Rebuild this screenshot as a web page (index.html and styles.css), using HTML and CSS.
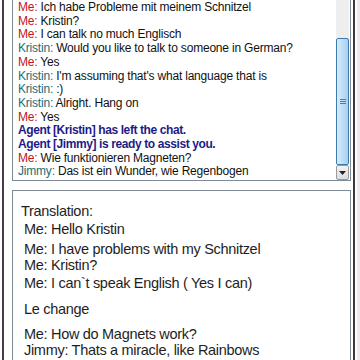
FILE: index.html
```html
<!DOCTYPE html>
<html lang="de">
<head>
  <meta charset="UTF-8" />
  <title>Chat</title>
  <link rel="stylesheet" href="styles.css">
</head>
<body>
<div class="window">
  <div class="inner">
    <div class="chat-box">
      <div class="log">
        <div class="line"><span class="me">Me:</span> Ich habe Probleme mit meinem Schnitzel</div>
        <div class="line"><span class="me">Me:</span> Kristin?</div>
        <div class="line"><span class="me">Me:</span> I can talk no much Englisch</div>
        <div class="line"><span class="agent">Kristin:</span> Would you like to talk to someone in German?</div>
        <div class="line"><span class="me">Me:</span> Yes</div>
        <div class="line"><span class="agent">Kristin:</span> I'm assuming that's what language that is</div>
        <div class="line"><span class="agent">Kristin:</span> :)</div>
        <div class="line"><span class="agent">Kristin:</span> Alright. Hang on</div>
        <div class="line"><span class="me">Me:</span> Yes</div>
        <div class="line system">Agent [Kristin] has left the chat.</div>
        <div class="line system">Agent [Jimmy] is ready to assist you.</div>
        <div class="line"><span class="me">Me:</span> Wie funktionieren Magneten?</div>
        <div class="line"><span class="agent">Jimmy:</span> Das ist ein Wunder, wie Regenbogen</div>
      </div>
      <div class="scrollbar">
        <div class="track"></div>
        <div class="thumb"><span class="grip"></span></div>
        <div class="arrow-down">
          <svg width="7" height="4" viewBox="0 0 7 4"><path d="M0 0h7L3.5 4z" fill="#222"/></svg>
        </div>
      </div>
    </div>
    <div class="note-box">
      <div class="note-title">Translation:</div>
      <div class="note-line l1">Me: Hello Kristin</div>
      <div class="note-line l2">Me: I have problems with my Schnitzel</div>
      <div class="note-line l3">Me: Kristin?</div>
      <div class="note-line l1">Me: I can`t speak English ( Yes I can)</div>
      <div class="note-line l4">Le change</div>
      <div class="note-line l5">Me: How do Magnets work?</div>
      <div class="note-line l3">Jimmy: Thats a miracle, like Rainbows</div>
    </div>
  </div>
</div>
</body>
</html>
```

FILE: styles.css
```css
* { box-sizing: border-box; margin: 0; padding: 0; }
body {
  background: #fff;
  font-family: 'Liberation Sans', Arial, sans-serif;
  overflow: hidden;
}
.window {
  width: 360px;
  height: 360px;
  border-left: 2px solid #4d3a48;
  margin-left: 2px;
  padding-left: 8px;
  display: flex;
}
.inner {
  width: 343px;
  border-right: 2px solid #3a3a3a;
  padding-right: 2px;
  margin-right: 2px;
  display: flex;
  flex-direction: column;
}
.window::after {
  content: '';
  flex: 1;
  background: #efe9ee;
}
.chat-box {
  display: flex;
  height: 181px;
  border: 1px solid #7f8a94;
  border-top: none;
}
.log {
  flex: 1;
  padding: 1px 0 0 5px;
  font-size: 12px;
  letter-spacing: -0.2px;
  line-height: 13.7px;
  color: #111;
}
.line { white-space: nowrap; }
.me { color: #c1161c; }
.agent { color: #1b6d78; }
.system {
  color: #1c1c86;
  font-weight: bold;
  letter-spacing: -0.4px;
}
.scrollbar {
  width: 13px;
  display: flex;
  flex-direction: column;
  margin-right: 1px;
}
.track {
  height: 38px;
  background: #eeeeee;
}
.thumb {
  height: 127px;
  background: linear-gradient(to right, #d8ecf9, #b9dcf4 60%, #a7cfee);
  border: 1px solid #3d7bad;
  border-radius: 2px;
  display: flex;
  align-items: center;
  justify-content: center;
}
.grip {
  width: 6px;
  height: 5px;
  border-top: 1px solid #4d7fa8;
  border-bottom: 1px solid #4d7fa8;
  position: relative;
}
.grip::after {
  content: '';
  position: absolute;
  left: 0;
  right: 0;
  top: 1px;
  border-top: 1px solid #4d7fa8;
}
.arrow-down {
  flex: 1;
  background: linear-gradient(#f4f4f4, #dcdcdc);
  border: 1px solid #9a9a9a;
  border-radius: 2px;
  display: flex;
  align-items: center;
  justify-content: center;
}
.note-box {
  margin-top: 9px;
  flex: 1;
  border: 1px solid #7f8a94;
  border-bottom: none;
  padding: 12px 0 0 8px;
  color: #1e1e1e;
  font-size: 14.5px;
  letter-spacing: -0.3px;
  line-height: 17px;
}
.note-line { padding-left: 3px; white-space: nowrap; }
.note-line.l1 { margin-top: 1px; }
.note-line.l2 { margin-top: 3px; }
.note-line.l3 { margin-top: -1px; }
.note-line.l4 { margin-top: 9px; }
.note-line.l5 { margin-top: 8px; }
```
